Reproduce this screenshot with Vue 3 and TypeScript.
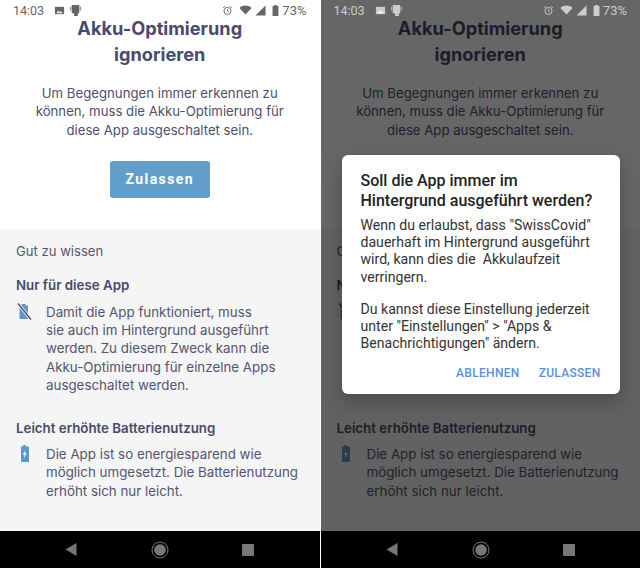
<template>
  <div class="screens">
    <div v-for="dimmed in [false, true]" :key="String(dimmed)" class="phone" :class="{ dimmed }">
      <div class="app">
        <div class="statusbar">
          <span class="time">14:03</span>
          <svg class="st-img" viewBox="0 0 12 12"><path d="M1 2h10v8H1z" fill="currentColor" /><path d="M2.500 9l2.200-3 1.600 2 1.200-1.400L9.500 9z" fill="#fff" opacity=".85" /></svg>
          <svg class="st-app" viewBox="0 0 14 14"><path d="M3 1h8v9H9.500v3h-4v-3H3z" fill="currentColor" /><path d="M1 3h1.500v4H1zM11.500 3H13v4h-1.500z" fill="currentColor" opacity=".7" /></svg>
          <span class="grow"></span>
          <svg class="st-alarm" viewBox="0 0 14 14"><circle cx="7" cy="7.500" r="4.500" fill="none" stroke="currentColor" stroke-width="1.200" /><path d="M7 5v3l2 1M1.500 3.500L4 1.500M12.500 3.500L10 1.500" fill="none" stroke="currentColor" stroke-width="1.100" /></svg>
          <svg class="st-wifi" viewBox="0 0 16 12"><path d="M0.500 3.500C4.800-.5 11.200-.5 15.500 3.500L8 11.500z" fill="currentColor" /></svg>
          <svg class="st-signal" viewBox="0 0 12 12"><path d="M11.500.5v11H.5z" fill="currentColor" /></svg>
          <svg class="st-batt" viewBox="0 0 8 13"><path d="M2.500 0h3v1.200H7.500V13H.5V1.200h2z" fill="currentColor" /></svg>
          <span class="pct">73%</span>
        </div>

        <div class="hero">
          <h1>Akku-Optimierung<br />ignorieren</h1>
          <p>Um Begegnungen immer erkennen zu können, muss die Akku-Optimierung für diese App ausgeschaltet sein.</p>
          <div class="cta">Zulassen</div>
        </div>

        <div class="info">
          <div class="good">Gut zu wissen</div>
          <h2>Nur für diese App</h2>
          <div class="row">
            <svg class="ico" viewBox="0 0 16 17"><path d="M5.500 1h4v1.500h2.500V16H3.500V2.500h2z" fill="#5a9bc4" /><path d="M2 .5L15 16.500" stroke="#f5f5f5" stroke-width="3" /><path d="M2 .5L15 16.500" stroke="#4a4a6a" stroke-width="1.300" /></svg>
            <p>Damit die App funktioniert, muss<br />sie auch im Hintergrund ausgeführt werden. Zu diesem Zweck kann die Akku-Optimierung für einzelne Apps ausgeschaltet werden.</p>
          </div>
          <h2 class="second">Leicht erhöhte Batterienutzung</h2>
          <div class="row">
            <svg class="ico" viewBox="0 0 16 17"><path d="M7.200 0h2.600v1.500H13V17H5V1.500h2.200z" fill="#5a9bc4" /><path d="M9.600 4.500L6.800 9.800h1.900L7.900 13.500l2.800-5.200H8.800z" fill="#fff" /></svg>
            <p>Die App ist so energiesparend wie möglich umgesetzt. Die Batterienutzung erhöht sich nur leicht.</p>
          </div>
        </div>

        <div class="navbar">
          <svg class="nav-back" viewBox="0 0 12 13"><path d="M11.500 0v13L.5 6.500z" fill="#777" /></svg>
          <svg class="nav-home" viewBox="0 0 18 18"><circle cx="9" cy="9" r="8" fill="none" stroke="#777" stroke-width="1" /><circle cx="9" cy="9" r="5.800" fill="#777" /></svg>
          <div class="nav-recent"></div>
        </div>
      </div>

      <template v-if="dimmed">
        <div class="scrim"></div>
        <div class="dialog">
          <h3>Soll die App immer im Hintergrund ausgeführt werden?</h3>
          <p>Wenn du erlaubst, dass "SwissCovid" dauerhaft im Hintergrund ausgeführt wird, kann dies die&nbsp; Akkulaufzeit verringern.</p>
          <p class="gap">Du kannst diese Einstellung jederzeit unter "Einstellungen" &gt; "Apps &amp; Benachrichtigungen" ändern.</p>
          <div class="actions">
            <span>ABLEHNEN</span>
            <span>ZULASSEN</span>
          </div>
        </div>
      </template>
    </div>
  </div>
</template>

<script setup lang="ts">
// left screen is the plain page, right screen the same page with the system dialog on top
</script>

<style>
html,
body {
  margin: 0;
  background: #000;
}
</style>

<style scoped>
.screens {
  display: flex;
  width: 640px;
  height: 568px;
  overflow: hidden;
  background: #fff;
  gap: 1px;
}

.phone {
  position: relative;
  flex: 1;
  height: 568px;
  overflow: hidden;
}

.app {
  display: flex;
  flex-direction: column;
  height: 568px;
  background: #fff;
  font-family: Inter, sans-serif;
  color: #4a4a6a;
}

.statusbar {
  box-sizing: border-box;
  display: flex;
  align-items: center;
  height: 15px;
  padding: 5px 13px 0 13px;
  color: #666;
  font-family: Roboto, sans-serif;
  font-size: 12.500px;
  flex: none;
}

.time {
  width: 32px;
}

.st-img {
  width: 11px;
  height: 11px;
  margin-left: 9px;
}

.st-app {
  width: 13px;
  height: 13px;
  margin-left: 4px;
}

.grow {
  flex: 1;
}

.st-alarm {
  width: 11px;
  height: 11px;
}

.st-wifi {
  width: 13px;
  height: 10px;
  margin-left: 6px;
}

.st-signal {
  width: 11px;
  height: 11px;
  margin-left: 3px;
}

.st-batt {
  width: 7px;
  height: 11px;
  margin-left: 6px;
}

.pct {
  margin-left: 3px;
  font-size: 13px;
}

.hero {
  flex: none;
  height: 214px;
  display: flex;
  flex-direction: column;
  align-items: center;
  text-align: center;
}

h1 {
  margin: 0;
  font-size: 18.200px;
  line-height: 26px;
  font-weight: 700;
  color: #4a4a6a;
}

.hero p {
  margin: 17px 0 0;
  width: 252px;
  font-size: 13.200px;
  line-height: 18.400px;
  color: #4f4f6d;
}

.cta {
  margin-top: 22px;
  width: 100px;
  height: 37px;
  line-height: 37px;
  background: #619fca;
  border-radius: 3px;
  color: #fff;
  font-family: Roboto, sans-serif;
  font-weight: 700;
  font-size: 14px;
  letter-spacing: 1.400px;
}

.info {
  flex: 1;
  background: #f5f5f5;
  padding: 13px 16px 0;
}

.good {
  font-size: 13.100px;
  line-height: 18px;
  color: #55556f;
}

h2 {
  margin: 16px 0 0;
  font-size: 13.300px;
  line-height: 18px;
  font-weight: 600;
  color: #4a4a6a;
}

h2.second {
  margin-top: 24px;
}

.row {
  display: flex;
  margin-top: 8.500px;
}

.ico {
  flex: none;
  width: 16px;
  height: 17px;
  margin-right: 14px;
}

.row p {
  margin: 0;
  width: 258px;
  font-size: 13.350px;
  line-height: 18.400px;
  color: #54546f;
}

.navbar {
  flex: none;
  height: 37px;
  background: #000;
  display: flex;
  align-items: center;
  position: relative;
}

.nav-back {
  width: 12px;
  height: 13px;
  margin-left: 65px;
}

.nav-home {
  width: 18px;
  height: 18px;
  margin-left: 74px;
}

.nav-recent {
  width: 12px;
  height: 12px;
  margin-left: 73px;
  background: #777;
  border-radius: 1px;
}

.scrim {
  position: absolute;
  inset: 0 0 37px 0;
  background: rgba(0, 0, 0, 0.6);
}

.dimmed .statusbar {
  color: #ccc;
}

.dimmed .statusbar > * {
  position: relative;
  z-index: 2;
}

.dialog {
  position: absolute;
  left: 21px;
  top: 155px;
  width: 278px;
  height: 239px;
  box-sizing: border-box;
  background: #fff;
  border-radius: 6px;
  padding: 16px 19px 0;
  font-family: Roboto, sans-serif;
  box-shadow: 0 8px 20px rgba(0, 0, 0, 0.25);
}

.dialog h3 {
  margin: 0;
  font-size: 16px;
  line-height: 20px;
  font-weight: 500;
  color: #222;
}

.dialog p {
  margin: 6px 0 0;
  font-size: 14.100px;
  line-height: 17.200px;
  color: #333;
}

.dialog p.gap {
  margin-top: 15px;
}

.actions {
  position: absolute;
  right: 19px;
  bottom: 14px;
  display: flex;
  gap: 19px;
  font-size: 12px;
  font-weight: 500;
  letter-spacing: 0.300px;
  color: #5b8fe0;
}
</style>
